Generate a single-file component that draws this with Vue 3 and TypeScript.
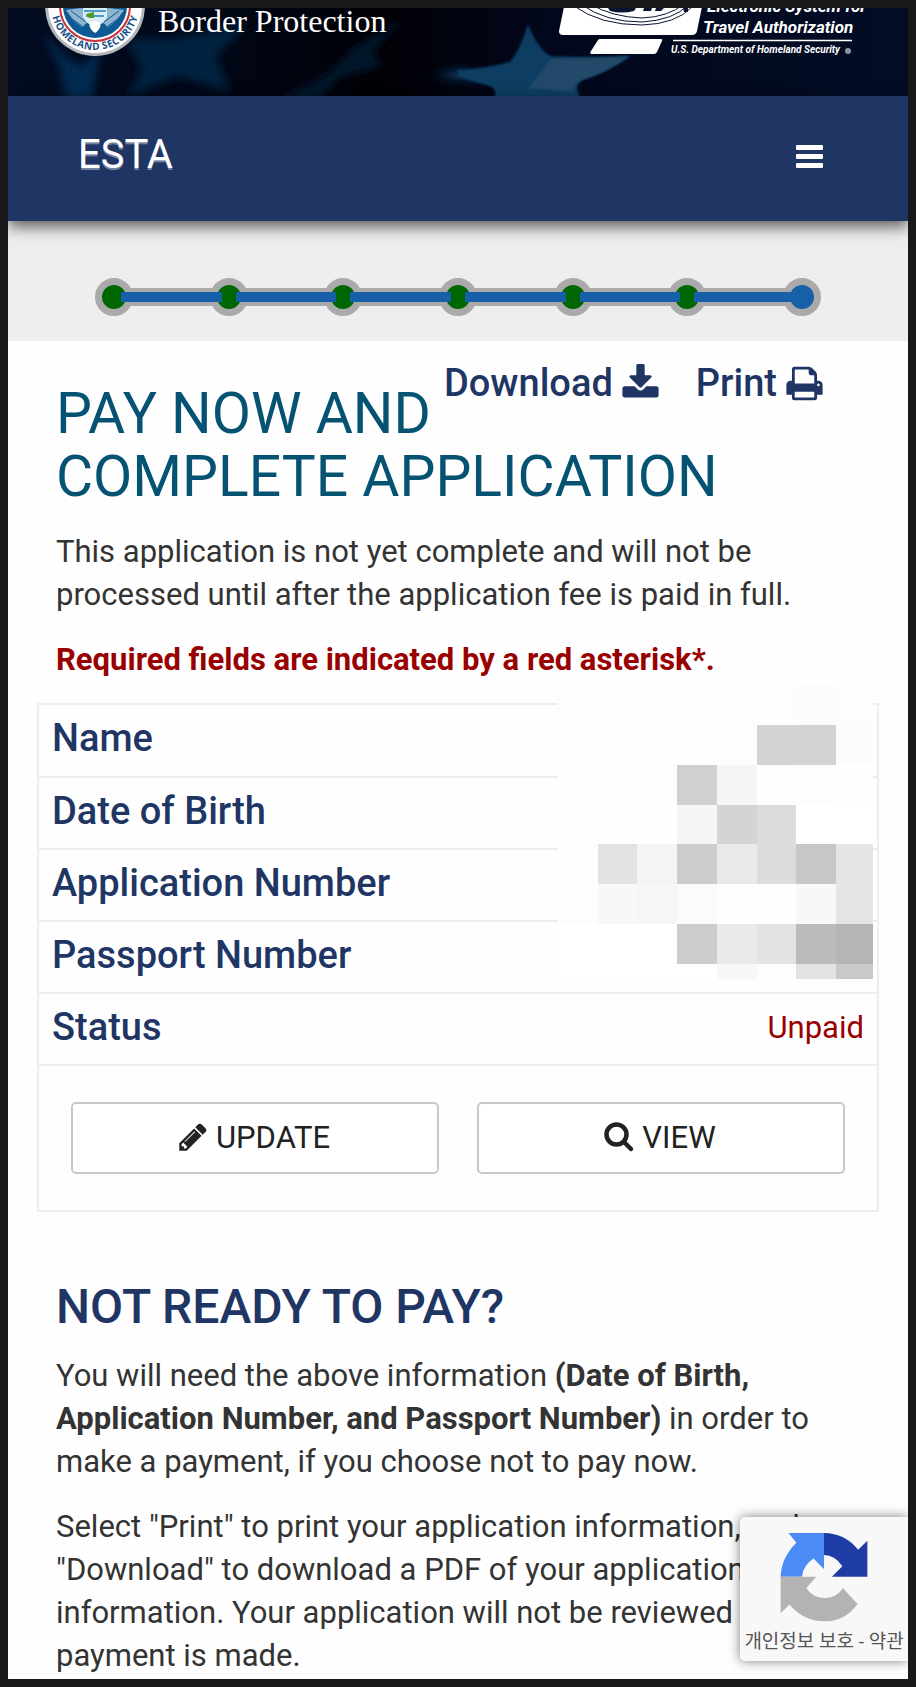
<script setup lang="ts">
interface Field {
  label: string
  value: string
}

const fields: Field[] = [
  { label: 'Name', value: '' },
  { label: 'Date of Birth', value: '' },
  { label: 'Application Number', value: '' },
  { label: 'Passport Number', value: '' },
  { label: 'Status', value: 'Unpaid' },
]

const steps: boolean[] = [true, true, true, true, true, true, false]

// Grey levels of the privacy mask laid over the applicant's data
const mask: string[] = [
  'fd fd fd fd fd fd fc fd',
  'fe fe fe fe fd d3 d3 fc',
  'fd fd fd d0 f5 fe fd fe',
  'fe fe fe f5 d4 dc ff ff',
  'fd e2 f4 cc e9 dc c7 e5',
  'fd f8 f6 fb fe fe f8 e5',
  'ff ff ff cc ea e3 bb b5',
  'ff ff ff ff f8 fd e2 c9',
]
const maskCells: string[] = mask.flatMap((row) => row.split(' ')).map((v) => `#${v}${v}${v}`)
</script>

<template>
  <div class="frame">
    <header>
      <div class="banner">
        <svg class="sky" viewBox="0 0 900 88" preserveAspectRatio="xMidYMid slice" aria-hidden="true">
          <defs>
            <linearGradient id="night" x1="0" x2="1" y1="0" y2="0">
              <stop offset="0" stop-color="#020c22" />
              <stop offset="0.2" stop-color="#010818" />
              <stop offset="0.42" stop-color="#010106" />
              <stop offset="0.6" stop-color="#02071b" />
              <stop offset="1" stop-color="#030d26" />
            </linearGradient>
            <filter id="soft" x="-20%" y="-20%" width="140%" height="140%">
              <feGaussianBlur stdDeviation="4" />
            </filter>
            <filter id="crisp"><feGaussianBlur stdDeviation="1" /></filter>
          </defs>
          <rect width="900" height="88" fill="url(#night)" />
          <g filter="url(#soft)">
            <path d="M34 24 L60 50 L74 58 L92 40 L84 92 L58 92 L52 60 Z" fill="#052a50" />
            <path d="M118 32 L165 30 L240 16 L208 48 L222 84 L170 68 L118 90 L134 62 Z" fill="#042040" />
            <path d="M268 92 L320 66 L346 40 L400 8 L364 44 L376 58 L330 70 L312 92 Z" fill="#03142b" />
            <path d="M425 68 L455 60 L470 74 Z" fill="#0b3658" />
          </g>
          <path filter="url(#crisp)" d="M520 16 Q530 42 543 48 Q584 50 622 48 Q600 64 574 72 Q564 80 575 92 H486 Q490 82 482 78 Q464 74 450 68 V62 Q480 60 502 54 Q512 42 520 16 Z" fill="#083d62" />
          <path filter="url(#crisp)" d="M543 51 Q584 51 622 48 Q600 64 574 72 Q564 78 566 84 L520 80 Z" fill="#214869" />
        </svg>

        <div class="agency">
          <svg class="seal" width="102" height="52" viewBox="0 0 102 52" role="img" aria-label="Homeland Security seal">
            <defs>
              <path id="ring" d="M10 -2 A41 41 0 0 0 92 -2" />
              <clipPath id="disc"><circle cx="51" cy="-2" r="33" /></clipPath>
            </defs>
            <circle cx="51" cy="-2" r="50" fill="#b3b6bb" />
            <circle cx="51" cy="-2" r="47" fill="#fff" />
            <circle cx="51" cy="-2" r="35" fill="#fff" stroke="#c8323a" stroke-width="2" />
            <circle cx="51" cy="-2" r="32" fill="#0d5a94" />
            <g clip-path="url(#disc)">
              <path d="M22 2 L38 0 L46 12 L38 19 L30 13 Z M80 2 L64 0 L56 12 L64 19 L72 13 Z" fill="#8fb4d0" />
              <path d="M27 3 L42 14 M24 8 L38 18 M75 3 L60 14 M78 8 L64 18" stroke="#0d5a94" stroke-width="1" />
              <path d="M39 0 H63 V9 Q60 16 51 19 Q42 16 39 9 Z" fill="#d9edf5" />
              <path d="M40 3 H62 M42 8 H60" stroke="#4b9bc4" stroke-width="2" />
              <path d="M42 6 L50 4 V10 H45 Z" fill="#4c9a2a" />
              <path d="M46 15 Q51 11 56 15 Q58 20 51 25 Q44 20 46 15 Z" fill="#fff" />
            </g>
            <text class="seal-text"><textPath href="#ring" startOffset="50%" text-anchor="middle">HOMELAND SECURITY</textPath></text>
          </svg>
          <span class="agency-name">Border Protection</span>
        </div>

        <svg class="esta-logo" width="314" height="52" viewBox="0 0 314 52" role="img" aria-label="Electronic System for Travel Authorization">
          <path d="M7 -6 L1 23 Q1 27 5 27 H134 Q138 27 139 23 L145 -6 Z" fill="#fff" />
          <g fill="none" stroke="#0a1430" stroke-width="1">
            <path d="M16 -2 Q42 17 84 17 Q118 16 134 -1" />
            <path d="M24 -3 Q48 14 84 14 Q116 12 130 -3" />
            <path d="M32 -4 Q54 9 84 10 Q110 9 126 -4" />
          </g>
          <path d="M50 0 H78 L76 3 Q64 6 52 3 Z M86 0 H94 L93 3 H85 Z M98 0 H106 L103 3 H97 Z M125 0 H130 V4 H126 Z" fill="#0a1430" />
          <path d="M40 32 Q41 31 42 31 H103 Q105 31 104 33 L99 44 Q98 46 96 46 H34 Q31 46 33 43 Z" fill="#fff" />
          <g class="esta-text">
            <text x="149" y="4" font-size="17">Electronic System for</text>
            <text x="145" y="25" font-size="17">Travel Authorization</text>
            <text x="113" y="45" font-size="10">U.S. Department of Homeland Security</text>
          </g>
          <path d="M115 32.500 H294" stroke="#fff" stroke-width="1.500" />
          <circle cx="290" cy="43" r="3" fill="#8b93a6" />
        </svg>
      </div>

      <nav class="navbar" aria-label="Main">
        <a class="brand" href="#">ESTA</a>
        <button class="menu" type="button" aria-label="Menu">
          <svg width="28" height="24" viewBox="0 0 28 24" fill="#fff" aria-hidden="true">
            <rect y="0" width="27" height="5" rx="1" />
            <rect y="9" width="27" height="5" rx="1" />
            <rect y="18" width="27" height="5" rx="1" />
          </svg>
        </button>
      </nav>
    </header>

    <section class="progress" aria-label="Progress">
      <ol class="steps">
        <li v-for="(done, i) in steps" :key="i"><span class="dot" :class="{ done }"></span></li>
      </ol>
    </section>

    <main>
      <div class="intro">
        <div class="actions">
          <a href="#">Download
            <svg width="39" height="39" viewBox="0 0 1792 1792" fill="currentColor" aria-hidden="true"><path d="M1344 1344q0 26-19 45t-45 19-45-19-19-45 19-45 45-19 45 19 19 45zm256 0q0 26-19 45t-45 19-45-19-19-45 19-45 45-19 45 19 19 45zm128-224v320q0 40-28 68t-68 28h-1472q-40 0-68-28t-28-68v-320q0-40 28-68t68-28h465l135 136q58 56 136 56t136-56l136-136h464q40 0 68 28t28 68zm-325-569q17 41-14 70l-448 448q-18 19-45 19t-45-19l-448-448q-31-29-14-70 17-39 59-39h256v-448q0-26 19-45t45-19h256q26 0 45 19t19 45v448h256q42 0 59 39z" /></svg>
          </a>
          <a href="#">Print
            <svg width="39" height="39" viewBox="0 0 1792 1792" fill="currentColor" aria-hidden="true"><path d="M448 1536h896v-256h-896v256zm0-640h896v-384h-160q-40 0-68-28t-28-68v-160h-640v640zm1152 64q0-26-19-45t-45-19-45 19-19 45 19 45 45 19 45-19 19-45zm128 0v416q0 13-9.500 22.500t-22.500 9.500h-224v160q0 40-28 68t-68 28h-960q-40 0-68-28t-28-68v-160h-224q-13 0-22.500-9.500t-9.500-22.500v-416q0-79 56.500-135.500t135.500-56.500h64v-544q0-40 28-68t68-28h672q40 0 88 20t76 48l152 152q28 28 48 76t20 88v256h64q79 0 135.500 56.500t56.500 135.500z" /></svg>
          </a>
        </div>
        <h1>PAY NOW AND COMPLETE APPLICATION</h1>
        <p>This application is not yet complete and will not be processed until after the application fee is paid in full.</p>
        <p class="required">Required fields are indicated by a red asterisk*.</p>
      </div>

      <section class="summary">
        <table>
          <tbody>
            <tr v-for="field in fields" :key="field.label">
              <th scope="row">{{ field.label }}</th>
              <td>{{ field.value }}</td>
            </tr>
          </tbody>
        </table>
        <div class="buttons">
          <button type="button">
            <svg width="32" height="32" viewBox="0 0 1792 1792" fill="currentColor" aria-hidden="true"><path d="M491 1536l91-91-235-235-91 91v107h128v128h107zm523-928q0-22-22-22-10 0-17 7l-542 542q-7 7-7 17 0 22 22 22 10 0 17-7l542-542q7-7 7-17zm-54-192l416 416-832 832h-416v-416zm683 96q0 53-37 90l-166 166-416-416 166-165q36-38 90-38 53 0 91 38l235 234q37 39 37 91z" /></svg>
            UPDATE
          </button>
          <button type="button">
            <svg width="32" height="32" viewBox="0 0 32 32" fill="none" stroke="currentColor" aria-hidden="true"><circle cx="13.500" cy="13.500" r="10" stroke-width="4.500" /><path d="M21 21 L28 28" stroke-width="4.500" stroke-linecap="round" /></svg>
            VIEW
          </button>
        </div>
        <div class="mask" aria-hidden="true">
          <span v-for="(shade, i) in maskCells" :key="i" :style="{ background: shade }"></span>
        </div>
      </section>

      <section class="later">
        <h2>NOT READY TO PAY?</h2>
        <p>You will need the above information <strong>(Date of Birth, Application Number, and Passport Number)</strong> in order to make a payment, if you choose not to pay now.</p>
        <p>Select "Print" to print your application information, and "Download" to download a PDF of your application information. Your application will not be reviewed until payment is made.</p>
      </section>
    </main>

    <aside class="captcha">
      <svg width="90" height="90" viewBox="236 154 272 274" aria-hidden="true">
        <path d="M264 157 H372 V267 L340 235 Q308 256 305 290 H240 Q242 232 288 187 Z" fill="#4a8bf5" />
        <path d="M372 157 Q436 158 476 208 L504 181 V290 H396 L428 258 Q406 225 372 224 Z" fill="#1f3ba6" />
        <path d="M240 290 H348 L318 325 Q340 355 374 355 Q408 355 430 325 L474 373 Q436 426 374 426 Q310 426 267 375 L240 401 Z" fill="#b3b3b3" />
      </svg>
      <div class="terms"><a href="#">개인정보 보호</a> - <a href="#">약관</a></div>
    </aside>
  </div>
</template>

<style>
body {
  margin: 0;
}
</style>

<style scoped>
* {
  box-sizing: border-box;
}
.frame {
  position: relative;
  border: 8px solid #191919;
  background: #fefefe;
  color: #333;
  font-family: Roboto, "Noto Sans CJK KR", sans-serif;
  font-size: 31px;
  line-height: 43px;
  overflow: hidden;
}
a {
  color: inherit;
  text-decoration: none;
}
.banner {
  position: relative;
  display: flex;
  justify-content: space-between;
  align-items: flex-start;
  height: 88px;
  padding: 0 36px;
  overflow: hidden;
  background: #02071b;
}
.sky {
  position: absolute;
  inset: 0;
  width: 100%;
  height: 100%;
}
.agency {
  position: relative;
  display: flex;
  gap: 12px;
}
.seal-text {
  fill: #1a4f86;
  font: bold 10px "Open Sans", sans-serif;
  dominant-baseline: middle;
}
.agency-name {
  color: #fff;
  font: 32px/26px "Liberation Serif", serif;
}
.esta-logo {
  position: relative;
}
.esta-text {
  fill: #fff;
  font-family: Roboto, sans-serif;
  font-style: italic;
  font-weight: bold;
}
.navbar {
  position: relative;
  display: flex;
  justify-content: space-between;
  align-items: center;
  height: 125px;
  padding: 0 84px 3px 70px;
  background: #1f3665;
  box-shadow: 0 6px 14px rgba(0, 0, 0, 0.6);
}
.brand {
  padding-bottom: 6px;
  color: #fff;
  font-size: 40px;
  text-shadow: 0 2px 0 rgba(255, 255, 255, 0.4);
}
.menu {
  display: flex;
  padding: 0;
  border: 0;
  background: none;
}
.progress {
  padding: 57px 87px 25px;
  background: #eee;
}
.steps {
  display: flex;
  margin: 0;
  padding: 0;
  list-style: none;
}
.steps li {
  position: relative;
  flex: 1;
  height: 38px;
}
.steps li:last-child {
  flex: none;
}
.dot {
  position: relative;
  z-index: 1;
  display: block;
  width: 38px;
  height: 38px;
  border: 7px solid #aaa;
  border-radius: 50%;
  background: #175fa9;
}
.dot.done {
  background: #060;
}
.steps li:not(:last-child)::before,
.steps li:not(:last-child)::after {
  content: "";
  position: absolute;
}
.steps li:not(:last-child)::before {
  top: 10px;
  left: 19px;
  z-index: 0;
  width: 100%;
  height: 18px;
  background: #aaa;
}
.steps li:not(:last-child)::after {
  top: 14px;
  left: 26px;
  z-index: 2;
  width: calc(100% - 14px);
  height: 10px;
  background: #175fa9;
}
.intro {
  padding: 41px 48px 0;
}
.actions {
  display: flex;
  gap: 36px;
  float: right;
  margin: -20px 36px 0 0;
  color: #1f3665;
  font-size: 38px;
  font-weight: 500;
}
.actions a {
  display: flex;
  align-items: center;
  gap: 8px;
}
h1 {
  margin: 0 0 22px;
  color: #055273;
  font-size: 57px;
  font-weight: 400;
  line-height: 63px;
}
p {
  margin: 0 0 22px;
}
.required {
  color: #900;
  font-weight: 700;
}
.summary {
  position: relative;
  margin: 0 29px;
  border: 2px solid #ededed;
}
table {
  width: 100%;
  border-collapse: collapse;
}
th,
td {
  height: 72px;
  padding: 0 13px 4px;
  border-bottom: 2px solid #ededed;
}
th {
  color: #1f3665;
  font-size: 38px;
  font-weight: 500;
  text-align: left;
}
td {
  color: #900;
  text-align: right;
}
.buttons {
  display: flex;
  gap: 38px;
  padding: 36px 32px;
}
.buttons button {
  display: flex;
  flex: 1;
  justify-content: center;
  align-items: center;
  gap: 7px;
  height: 72px;
  padding: 0 3px 2px 0;
  border: 2px solid #c8c8c8;
  border-radius: 5px;
  background: #fff;
  color: #222;
  font: 31px/43px Roboto, sans-serif;
}
.mask {
  position: absolute;
  top: -20px;
  right: 4px;
  display: grid;
  grid-template-columns: repeat(7, 40fr) 37fr;
  grid-template-rows: repeat(7, 40fr) 15fr;
  width: 315px;
  height: 294px;
}
.later {
  padding: 64px 48px 0;
}
.later p:last-child {
  margin-bottom: 2px;
}
h2 {
  margin: 0 0 16px;
  color: #1f3665;
  font-size: 48px;
  font-weight: 500;
  line-height: 62px;
}
.captcha {
  position: absolute;
  right: 0;
  bottom: 18px;
  width: 168px;
  height: 144px;
  padding-top: 15px;
  border-radius: 5px 0 0 5px;
  background: #f8f8f8;
  box-shadow: 0 0 12px rgba(0, 0, 0, 0.5);
  text-align: center;
}
.captcha svg {
  display: block;
  margin: 0 auto;
}
.terms {
  color: #555;
  font-size: 19px;
  line-height: 40px;
  white-space: nowrap;
}
</style>
